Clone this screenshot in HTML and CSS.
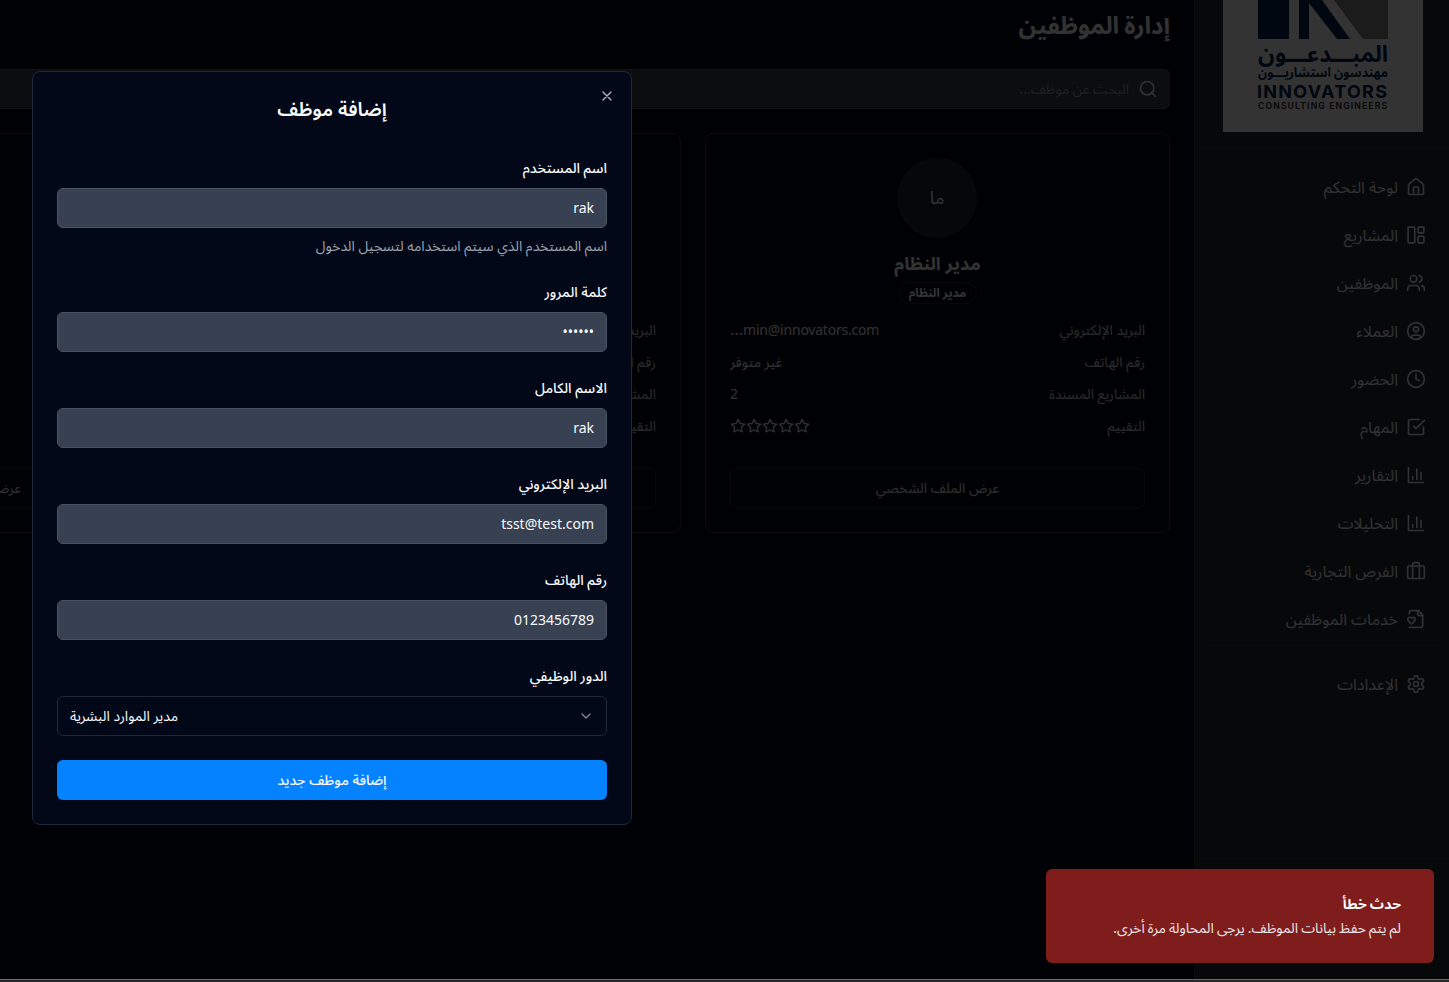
FILE: index.html
```html
<!DOCTYPE html>
<html lang="ar" dir="rtl">
<head>
<meta charset="utf-8">
<title>إدارة الموظفين</title>
<link rel="stylesheet" href="styles.css">
</head>
<body>
<svg class="defs" aria-hidden="true">
  <symbol id="star" viewBox="0 0 24 24"><polygon points="12 2 15.09 8.26 22 9.27 17 14.14 18.18 21.02 12 17.77 5.82 21.02 7 14.14 2 9.27 8.91 8.26 12 2"/></symbol>
  <symbol id="chart" viewBox="0 0 24 24"><path d="M3 3v18h18M18 17V9M13 17V5M8 17v-3"/></symbol>
</svg>
<div class="app">
  <aside class="sidebar">
    <div class="brand">
      <div class="logo">
        <svg class="mark" viewBox="0 0 130 39"><path fill="#00234f" d="M0 0h31v39H0zM41 0h10v39H41zM51 0h13l28 39H79L51 3z"/><path fill="#878787" d="M76 0h54v39h-25z"/></svg>
        <svg class="wordmark" viewBox="0 0 130 72" direction="rtl">
          <text class="w1" x="130" y="23" textLength="130" lengthAdjust="spacingAndGlyphs">المبـــدعـــون</text>
          <text class="w2" x="130" y="38" textLength="130" lengthAdjust="spacingAndGlyphs">مهندسون استشاريـــون</text>
          <text class="w3" direction="ltr" x="-1" y="59" textLength="130">INNOVATORS</text>
          <text class="w4" direction="ltr" x="0" y="70" textLength="129">CONSULTING ENGINEERS</text>
        </svg>
      </div>
    </div>
    <nav class="nav">
      <a class="item"><svg class="ic" viewBox="0 0 24 24"><path d="M15 21v-8a1 1 0 0 0-1-1h-4a1 1 0 0 0-1 1v8"/><path d="M3 10a2 2 0 0 1 .709-1.528l7-5.999a2 2 0 0 1 2.582 0l7 5.999A2 2 0 0 1 21 10v9a2 2 0 0 1-2 2H5a2 2 0 0 1-2-2z"/></svg><span>لوحة التحكم</span></a>
      <a class="item"><svg class="ic" viewBox="0 0 24 24"><rect x="2.5" y="2.5" width="8" height="19" rx="1"/><rect x="14.5" y="2.5" width="7" height="7" rx="1"/><rect x="14.5" y="13.5" width="7" height="8" rx="1"/></svg><span>المشاريع</span></a>
      <a class="item"><svg class="ic" viewBox="0 0 24 24"><path d="M16 21v-2a4 4 0 0 0-4-4H6a4 4 0 0 0-4 4v2"/><circle cx="9" cy="7" r="4"/><path d="M22 21v-2a4 4 0 0 0-3-3.87M16 3.13a4 4 0 0 1 0 7.75"/></svg><span>الموظفين</span></a>
      <a class="item"><svg class="ic" viewBox="0 0 24 24"><circle cx="12" cy="12" r="10"/><circle cx="12" cy="10" r="3"/><path d="M7 20.662V19a2 2 0 0 1 2-2h6a2 2 0 0 1 2 2v1.662"/></svg><span>العملاء</span></a>
      <a class="item"><svg class="ic" viewBox="0 0 24 24"><circle cx="12" cy="12" r="10"/><path d="M12 6v6l4 2"/></svg><span>الحضور</span></a>
      <a class="item"><svg class="ic" viewBox="0 0 24 24"><path d="m9 11 3 3L22 4"/><path d="M21 12v7a2 2 0 0 1-2 2H5a2 2 0 0 1-2-2V5a2 2 0 0 1 2-2h11"/></svg><span>المهام</span></a>
      <a class="item"><svg class="ic"><use href="#chart"/></svg><span>التقارير</span></a>
      <a class="item"><svg class="ic"><use href="#chart"/></svg><span>التحليلات</span></a>
      <a class="item"><svg class="ic" viewBox="0 0 24 24"><rect x="2" y="6" width="20" height="15" rx="2"/><path d="M16 21V4a2 2 0 0 0-2-2h-4a2 2 0 0 0-2 2v17"/></svg><span>الفرص التجارية</span></a>
      <a class="item"><svg class="ic" viewBox="0 0 24 24"><path d="M4 22h14a2 2 0 0 0 2-2V7l-5-5H6a2 2 0 0 0-2 2v2"/><path d="M14 2v4a2 2 0 0 0 2 2h4"/><path d="M10.29 10.7a2.43 2.43 0 0 0-2.66-.52c-.29.12-.56.3-.78.53l-.35.34-.35-.34a2.43 2.43 0 0 0-2.65-.53c-.3.12-.56.3-.79.53-.95.94-1 2.53.2 3.74L6.5 18l3.6-3.55c1.2-1.21 1.14-2.8.19-3.74Z"/></svg><span>خدمات الموظفين</span></a>
    </nav>
    <div class="nav settings">
      <a class="item"><svg class="ic" viewBox="0 0 24 24"><path d="M12.22 2h-.44a2 2 0 0 0-2 2v.18a2 2 0 0 1-1 1.73l-.43.25a2 2 0 0 1-2 0l-.15-.08a2 2 0 0 0-2.73.73l-.22.38a2 2 0 0 0 .73 2.73l.15.1a2 2 0 0 1 1 1.72v.51a2 2 0 0 1-1 1.74l-.15.09a2 2 0 0 0-.73 2.73l.22.38a2 2 0 0 0 2.73.73l.15-.08a2 2 0 0 1 2 0l.43.25a2 2 0 0 1 1 1.73V20a2 2 0 0 0 2 2h.44a2 2 0 0 0 2-2v-.18a2 2 0 0 1 1-1.73l.43-.25a2 2 0 0 1 2 0l.15.08a2 2 0 0 0 2.73-.73l.22-.39a2 2 0 0 0-.73-2.73l-.15-.08a2 2 0 0 1-1-1.74v-.5a2 2 0 0 1 1-1.74l.15-.09a2 2 0 0 0 .73-2.73l-.22-.38a2 2 0 0 0-2.73-.73l-.15.08a2 2 0 0 1-2 0l-.43-.25a2 2 0 0 1-1-1.73V4a2 2 0 0 0-2-2z"/><circle cx="12" cy="12" r="3"/></svg><span>الإعدادات</span></a>
    </div>
    <div class="side-foot"></div>
  </aside>
  <main class="main">
    <h1 class="title">إدارة الموظفين</h1>
    <div class="search"><svg class="ic" viewBox="0 0 24 24"><circle cx="11" cy="11" r="8"/><path d="m21 21-4.3-4.3"/></svg><span>البحث عن موظف...</span></div>
    <div class="cards">
      <article class="card">
        <div class="avatar">ما</div>
        <h2 class="name">مدير النظام</h2>
        <span class="badge">مدير النظام</span>
        <dl class="info">
          <div class="row"><dt>البريد الإلكتروني</dt><dd class="mail">min@innovators.com<span class="more">…</span></dd></div>
          <div class="row"><dt>رقم الهاتف</dt><dd>غير متوفر</dd></div>
          <div class="row"><dt>المشاريع المسندة</dt><dd>2</dd></div>
          <div class="row"><dt>التقييم</dt><dd class="stars"><svg><use href="#star"/></svg><svg><use href="#star"/></svg><svg><use href="#star"/></svg><svg><use href="#star"/></svg><svg><use href="#star"/></svg></dd></div>
        </dl>
        <div class="profile">عرض الملف الشخصي</div>
      </article>
      <article class="card">
        <div class="avatar"></div>
        <h2 class="name"></h2>
        <span class="badge blank"></span>
        <dl class="info">
          <div class="row"><dt>البريد الإلكتروني</dt></div>
          <div class="row"><dt>رقم الهاتف</dt></div>
          <div class="row"><dt>المشاريع المسندة</dt></div>
          <div class="row"><dt>التقييم</dt></div>
        </dl>
        <div class="profile"></div>
      </article>
      <article class="card">
        <div class="profile">عرض الملف الشخصي</div>
      </article>
    </div>
  </main>
</div>
<div class="overlay"></div>
<section class="dialog">
  <svg class="close" viewBox="0 0 24 24"><path d="M18 6 6 18M6 6l12 12"/></svg>
  <h2 class="dialog-title">إضافة موظف</h2>
  <form class="form">
    <div class="field"><label>اسم المستخدم</label><div class="input">rak</div><p class="hint">اسم المستخدم الذي سيتم استخدامه لتسجيل الدخول</p></div>
    <div class="field"><label>كلمة المرور</label><div class="input">••••••</div></div>
    <div class="field"><label>الاسم الكامل</label><div class="input">rak</div></div>
    <div class="field"><label>البريد الإلكتروني</label><div class="input">tsst@test.com</div></div>
    <div class="field"><label>رقم الهاتف</label><div class="input">0123456789</div></div>
    <div class="field"><label>الدور الوظيفي</label><div class="select"><svg viewBox="0 0 24 24"><path d="m6 9 6 6 6-6"/></svg><span>مدير الموارد البشرية</span></div></div>
    <div class="submit">إضافة موظف جديد</div>
  </form>
</section>
<div class="toast"><strong>حدث خطأ</strong><span>لم يتم حفظ بيانات الموظف. يرجى المحاولة مرة أخرى.</span></div>
<div class="window-edge"></div>
</body>
</html>
```

FILE: styles.css
```css
* { box-sizing: border-box; margin: 0; padding: 0; }
html, body { height: 982px; overflow: hidden; }
body {
  background: #020817;
  color: #f8fafc;
  font: 14px/20px "Noto Sans", "Noto Sans Arabic", sans-serif;
}
svg { fill: none; stroke: currentColor; stroke-width: 2; stroke-linecap: round; stroke-linejoin: round; flex: none; }
.defs { position: absolute; width: 0; height: 0; }
.app { display: flex; height: 982px; overflow: hidden; }

.sidebar { width: 255px; flex: none; display: flex; flex-direction: column; background: #23282f; border-left: 1px solid #363c46; }
.brand { height: 149px; display: flex; justify-content: center; padding-left: 2px; border-bottom: 1px solid #2e343d; }
.logo { width: 200px; height: 132px; background: #fff; display: flex; flex-direction: column; align-items: center; padding-right: 1px; }
.mark { width: 130px; height: 39px; stroke: none; }
.wordmark { width: 130px; height: 72px; stroke: none; fill: #00234f; overflow: visible; }
.w1 { font-size: 23px; font-weight: 700; }
.w2 { font-size: 13px; font-weight: 700; }
.w3 { font: 700 18px Inter, sans-serif; }
.w4 { font: 600 8.6px Inter, sans-serif; fill: #222; }
.nav { display: flex; flex-direction: column; gap: 8px; margin: 0 7px 0 8px; padding: 18px 16px 6px; border-bottom: 1px solid #2e343d; font-size: 16px; color: #f3f4f6; }
.item { display: flex; align-items: center; gap: 8px; height: 40px; }
.ic { width: 20px; height: 20px; }
.settings { border: 0; padding-top: 18px; }
.side-foot { margin-top: auto; height: 124px; border-top: 1px solid #2e343d; }

.main { width: 1491px; flex: none; padding: 7px 24px; }
.title { font-size: 24px; line-height: 36px; font-weight: 700; word-spacing: -1px; }
.search { display: flex; align-items: center; gap: 8px; height: 40px; margin-top: 26px; padding: 0 11px 0 12px; background: #3c434e; border: 1px solid #4b5563; border-radius: 6px; color: #939aa5; word-spacing: -.5px; }
.search .ic { color: #f3f4f6; }
.search span { margin-right: 1px; }
.cards { display: grid; grid-template-columns: repeat(3, 465px); gap: 24px; margin-top: 24px; }
.card { height: 400px; display: flex; flex-direction: column; align-items: center; padding: 24px; border: 1px solid #323b48; border-radius: 8px; }
.avatar { width: 80px; height: 80px; margin-right: 1px; border-radius: 50%; background: #1a262c; display: flex; align-items: center; justify-content: center; font-size: 18px; line-height: 26px; padding-bottom: 2px; flex: none; }
.name { font-size: 18px; line-height: 28px; height: 28px; margin-top: 11px; font-weight: 700; }
.badge { height: 22px; margin-top: 5px; padding: 0 10px; border: 1px solid #1e293b; border-radius: 11px; font-size: 12px; font-weight: 700; line-height: 20px; }
.blank { visibility: hidden; }
.info { align-self: stretch; display: grid; gap: 12px; margin-top: 16px; }
.row { display: flex; justify-content: space-between; height: 20px; color: #d1d5db; }
.row dd { color: #f3f4f6; }
.row .mail { letter-spacing: -.22px; }
.row .more { letter-spacing: 0; font-size: 16.5px; line-height: 1; }
.stars { display: flex; align-items: center; }
.stars svg { width: 16px; height: 16px; }
.profile { align-self: stretch; height: 40px; margin-top: auto; display: flex; align-items: center; justify-content: center; border: 1px solid #1e293b; border-radius: 6px; color: #e5e7eb; }

.overlay { position: absolute; inset: 0; background: rgba(0, 0, 0, .8); }

.dialog { position: absolute; left: 32px; top: 71px; width: 600px; height: 754px; padding: 23px 24px; background: #020817; border: 1px solid #1e293b; border-radius: 8px; }
.close { position: absolute; top: 16px; right: 16px; width: 16px; height: 16px; color: #b2b5bb; }
.dialog-title { font-size: 19.3px; line-height: 28px; font-weight: 600; text-align: center; }
.form { display: flex; flex-direction: column; gap: 24px; margin-top: 33px; }
.field { display: flex; flex-direction: column; gap: 8px; }
.field label { font-weight: 500; line-height: 24px; height: 24px; }
.input { height: 40px; padding: 0 12px; line-height: 38px; background: #374151; border: 1px solid #4b5563; border-radius: 6px; text-align: right; }
.hint { color: #9ca3af; }
.select { display: flex; align-items: center; justify-content: space-between; height: 40px; padding: 0 12px; border: 1px solid #1e293b; border-radius: 6px; }
.select svg { width: 16px; height: 16px; color: #7f8490; }
.submit { height: 40px; line-height: 40px; text-align: center; border-radius: 6px; background: #0582ff; font-weight: 500; }

.toast { position: absolute; left: 1046px; top: 869px; width: 388px; height: 94px; display: flex; flex-direction: column; justify-content: center; gap: 4px; padding: 0 33px; background: #7f1d1d; border-radius: 6px; word-spacing: -.5px; }
.toast span { opacity: .9; }
.window-edge { position: absolute; left: 0; right: 0; top: 979px; height: 3px; background: #2b2829; border-top: 1px solid #6b6969; }
```
